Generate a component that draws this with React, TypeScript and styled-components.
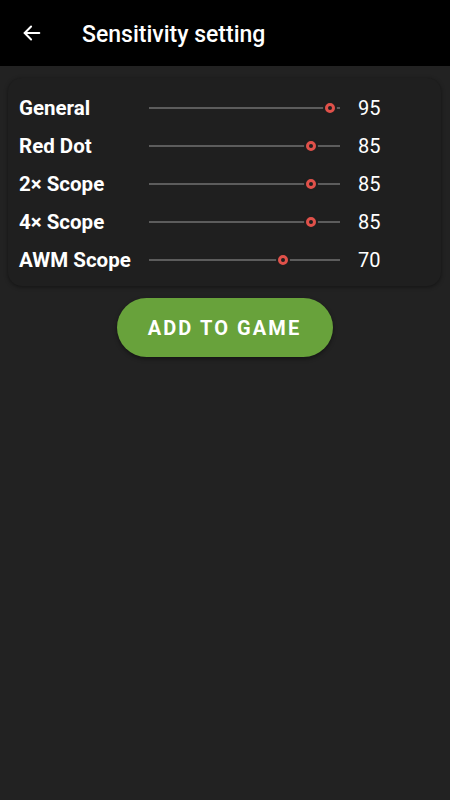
import React from "react";
import styled, { createGlobalStyle } from "styled-components";

const GlobalStyle = createGlobalStyle`
  html, body {
    margin: 0;
    padding: 0;
    background: #222222;
  }
  body {
    font-family: Roboto, "Liberation Sans", sans-serif;
    color: #ffffff;
  }
`;

type Setting = { label: string; value: number };

const settings: Setting[] = [
  { label: "General", value: 95 },
  { label: "Red Dot", value: 85 },
  { label: "2× Scope", value: 85 },
  { label: "4× Scope", value: 85 },
  { label: "AWM Scope", value: 70 },
];

const Slider = ({ value }: { value: number }) => (
  <Track>
    <TrackLine />
    <Thumb style={{ left: `${value}%` }} />
  </Track>
);

export default function App() {
  return (
    <Screen>
      <GlobalStyle />
      <Header>
        <BackButton aria-label="back">
          <svg width="22" height="22" viewBox="0 0 24 24" fill="none" stroke="#fff" strokeWidth="2.2" strokeLinecap="round" strokeLinejoin="round">
            <path d="M20 12H4" />
            <path d="M11 5l-7 7 7 7" />
          </svg>
        </BackButton>
        <Title>Sensitivity setting</Title>
      </Header>
      <Content>
        <Card>
          {settings.map((s) => (
            <Row key={s.label}>
              <Label>{s.label}</Label>
              <Slider value={s.value} />
              <Value>{s.value}</Value>
            </Row>
          ))}
        </Card>
        <AddButton>ADD TO GAME</AddButton>
      </Content>
    </Screen>
  );
}

const Screen = styled.div`
  min-height: 800px;
  background: #222222;
`;

const Header = styled.header`
  height: 66px;
  background: #000000;
  display: flex;
  align-items: center;
  padding-left: 21px;
  box-sizing: border-box;
`;

const BackButton = styled.div`
  width: 22px;
  height: 22px;
  display: flex;
  align-items: center;
  justify-content: center;
  margin-top: -1px;
`;

const Title = styled.h1`
  margin: 2px 0 0 39px;
  font-size: 23px;
  font-weight: 500;
  letter-spacing: 0;
  color: #ffffff;
`;

const Content = styled.main`
  display: flex;
  flex-direction: column;
  align-items: center;
  padding: 12px 9px 0 8px;
`;

const Card = styled.section`
  align-self: stretch;
  background: #1f1f1f;
  border-radius: 14px;
  box-shadow: 0 1px 4px rgba(0, 0, 0, 0.45);
  padding: 11px 0 7px 11px;
  display: flex;
  flex-direction: column;
`;

const Row = styled.div`
  height: 38px;
  display: grid;
  grid-template-columns: 130px 191px auto;
  align-items: center;
`;

const Label = styled.span`
  font-size: 20.5px;
  font-weight: 700;
  color: #ffffff;
  white-space: nowrap;
`;

const Track = styled.div`
  position: relative;
  height: 12px;
  display: flex;
  align-items: center;
`;

const TrackLine = styled.div`
  width: 100%;
  height: 2px;
  background: #5c5c5c;
`;

const Thumb = styled.div`
  position: absolute;
  top: 50%;
  width: 4px;
  height: 4px;
  border: 3px solid #e0514a;
  background: #1f1f1f;
  border-radius: 50%;
  transform: translate(-50%, -50%);
  box-shadow: 0 0 0 2px #1f1f1f;
`;

const Value = styled.span`
  margin-left: 18px;
  font-size: 20px;
  font-weight: 400;
  color: #ffffff;
`;

const AddButton = styled.button`
  margin-top: 12px;
  width: 216px;
  height: 59px;
  border: none;
  border-radius: 30px;
  background: #68a23b;
  color: #ffffff;
  font-family: Roboto, "Liberation Sans", sans-serif;
  font-size: 20px;
  font-weight: 700;
  letter-spacing: 2.1px;
  box-shadow: 0 2px 4px rgba(0, 0, 0, 0.4);
`;
